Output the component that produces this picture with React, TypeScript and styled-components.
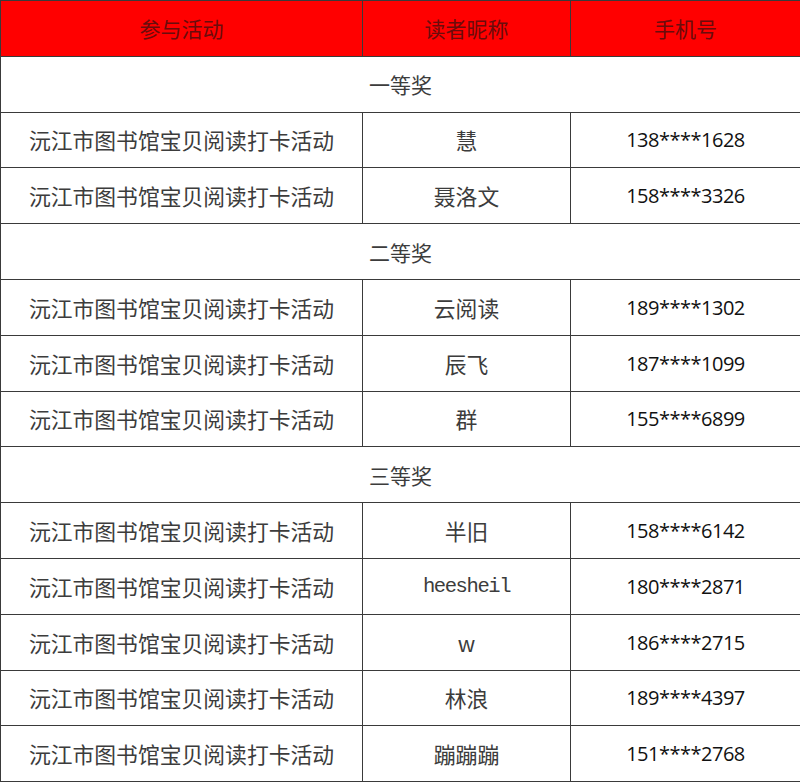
import { Fragment } from "react";
import styled, { createGlobalStyle } from "styled-components";

const GlobalStyle = createGlobalStyle`
  html, body {
    margin: 0;
    padding: 0;
    background: #ffffff;
  }
`;

const StyledTable = styled.div`
  width: 800px;
  display: grid;
  grid-template-columns: 362px 208px 230px;
  grid-auto-rows: 55.8px;
  box-sizing: border-box;
  border-left: 1px solid #3a3a3a;
  border-top: 1px solid #3a3a3a;
  font-family: "Noto Sans CJK SC", "Noto Sans", sans-serif;
`;

const StyledCell = styled.div<{ $mono?: boolean; $phone?: boolean }>`
  display: flex;
  align-items: center;
  justify-content: center;
  box-sizing: border-box;
  border-right: 1px solid #3a3a3a;
  border-bottom: 1px solid #3a3a3a;
  font-size: ${(p) => (p.$phone ? "20px" : p.$mono ? "20.5px" : "21.8px")};
  font-family: ${(p) =>
    p.$phone
      ? '"Open Sans", sans-serif'
      : p.$mono
      ? '"Liberation Mono", monospace'
      : '"Noto Sans CJK SC", sans-serif'};
  letter-spacing: ${(p) => (p.$phone ? "-0.5px" : p.$mono ? "-1.4px" : "0")};
  color: ${(p) => (p.$phone ? "#111111" : "#3c3c3c")};
  font-weight: ${(p) => (p.$phone ? 500 : 400)};
`;

const StyledHeadCell = styled(StyledCell)`
  background: #ff0000;
  color: #6a0c0c;
  font-size: 21px;
`;

const StyledSection = styled(StyledCell)`
  grid-column: 1 / -1;
  font-size: 21px;
`;

type Winner = { nick: string; phone: string; mono?: boolean };

const ACTIVITY = "沅江市图书馆宝贝阅读打卡活动";

const groups: { title: string; rows: Winner[] }[] = [
  {
    title: "一等奖",
    rows: [
      { nick: "慧", phone: "138****1628" },
      { nick: "聂洛文", phone: "158****3326" },
    ],
  },
  {
    title: "二等奖",
    rows: [
      { nick: "云阅读", phone: "189****1302" },
      { nick: "辰飞", phone: "187****1099" },
      { nick: "群", phone: "155****6899" },
    ],
  },
  {
    title: "三等奖",
    rows: [
      { nick: "半旧", phone: "158****6142" },
      { nick: "heesheil", phone: "180****2871", mono: true },
      { nick: "w", phone: "186****2715" },
      { nick: "林浪", phone: "189****4397" },
      { nick: "蹦蹦蹦", phone: "151****2768" },
    ],
  },
];

export default function App() {
  return (
    <>
      <GlobalStyle />
      <StyledTable>
        <StyledHeadCell>参与活动</StyledHeadCell>
        <StyledHeadCell>读者昵称</StyledHeadCell>
        <StyledHeadCell>手机号</StyledHeadCell>
        {groups.map((g) => (
          <Fragment key={g.title}>
            <StyledSection>{g.title}</StyledSection>
            {g.rows.map((r) => (
              <Fragment key={r.phone}>
                <StyledCell>{ACTIVITY}</StyledCell>
                <StyledCell $mono={r.mono}>{r.nick}</StyledCell>
                <StyledCell $phone>{r.phone}</StyledCell>
              </Fragment>
            ))}
          </Fragment>
        ))}
      </StyledTable>
    </>
  );
}
